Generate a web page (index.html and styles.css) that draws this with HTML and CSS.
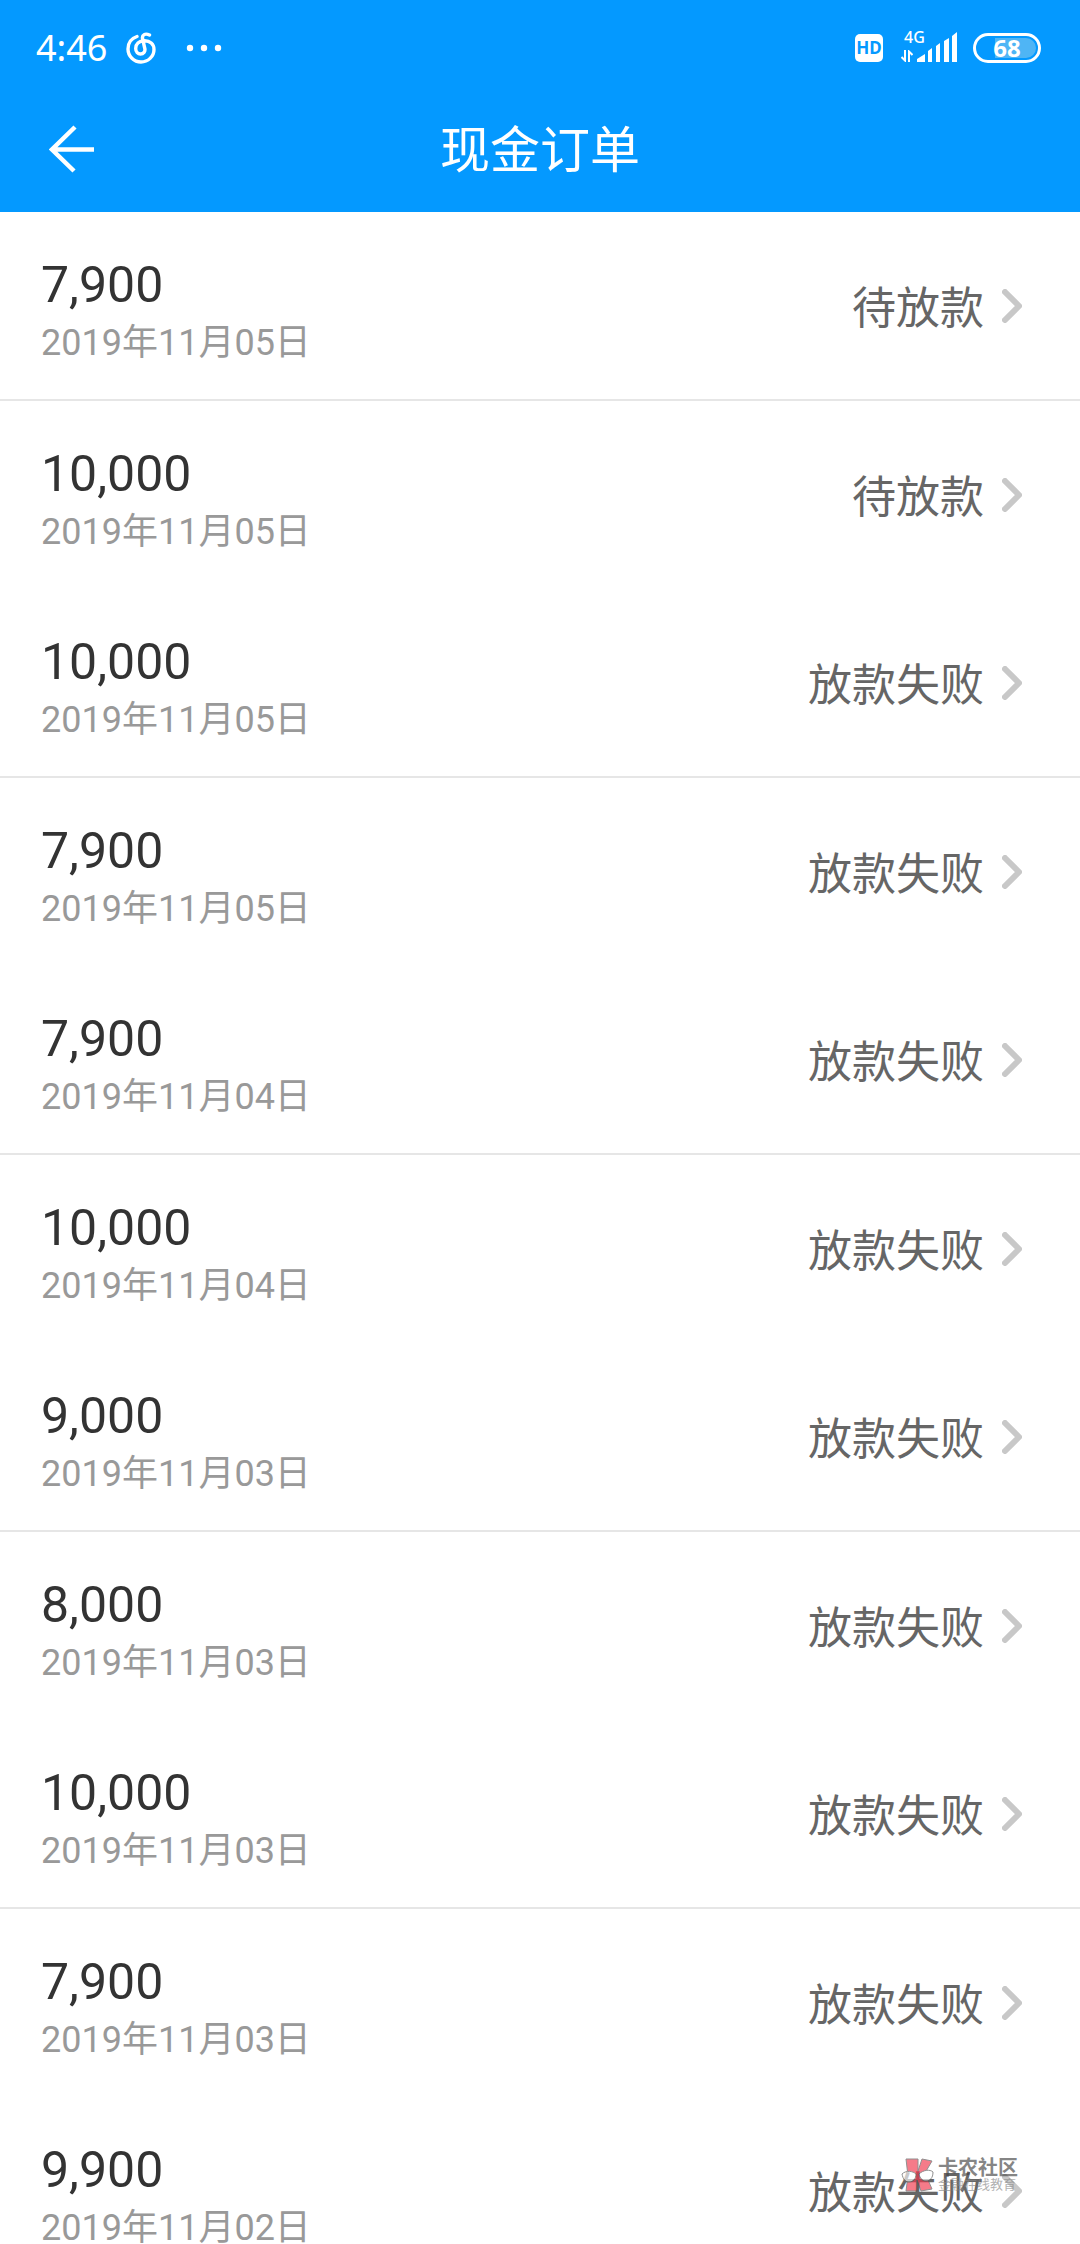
FILE: index.html
```html
<!DOCTYPE html>
<html lang="zh-CN">
<head>
<meta charset="utf-8">
<meta name="viewport" content="width=device-width, initial-scale=1">
<title>现金订单</title>
<link rel="stylesheet" href="styles.css">
</head>
<body>
<svg class="defs" aria-hidden="true">
  <symbol id="chevron" viewBox="0 0 20 34"><path d="M3 3L17 17L3 31" fill="none" stroke="#c8c8c8" stroke-width="6" stroke-linecap="round" stroke-linejoin="round"/></symbol>
</svg>
<div class="screen">
  <header class="header">
    <div class="statusbar">
      <div class="status-left">
        <span class="clock">4:46</span>
        <svg class="music" viewBox="0 0 30 32" aria-hidden="true"><g fill="none" stroke="#fff" stroke-width="3.4" stroke-linecap="round"><path d="M11 4.500C5 6.500 2 11 2 17C2 24.500 8 30 15 30C22 30 28 24.500 28 17.500C28 12 24 8.500 18 8.800C13 9 9.700 12 9.700 16.500C9.700 20 12 22 14.500 22C17.500 22 19.500 19.500 18.800 16.500L16.500 6.500C16 3 19 0.800 23.500 3"/></g></svg>
        <svg class="dots" viewBox="0 0 36 8" aria-hidden="true"><g fill="#fff"><circle cx="4" cy="4" r="3.200"/><circle cx="18" cy="4" r="3.200"/><circle cx="32" cy="4" r="3.200"/></g></svg>
      </div>
      <div class="status-right">
        <span class="hd">HD</span>
        <div class="network">
          <div class="network-type"><span class="gen">4G</span>
            <svg class="arrows" viewBox="0 0 12 12" aria-hidden="true"><path d="M4 0V10.500L0.500 7M8 12V1.500L11.500 5" fill="none" stroke="#fff" stroke-width="2"/></svg>
          </div>
          <svg class="signal" viewBox="0 0 40 30" aria-hidden="true"><path fill="#fff" d="M0 27L8 22V30H0ZM11 19L15 16V30H11ZM19 14L23 11V30H19ZM27 9L32 6V30H27ZM35 4L40 0V30H35Z"/></svg>
        </div>
        <span class="battery"><span class="battery-level">68</span></span>
      </div>
    </div>
    <div class="navbar">
      <button class="back" type="button" aria-label="返回"><svg viewBox="0 0 46 48" aria-hidden="true"><path d="M26 2L3 24.500L25 46M3 24.500H45" fill="none" stroke="#fff" stroke-width="4.500"/></svg></button>
      <h1 class="title">现金订单</h1>
    </div>
  </header>
  <main class="orders">
    <a class="order" href="#"><span class="info"><span class="amount">7,900</span><span class="date">2019年11月05日</span></span><span class="state">待放款</span><svg class="chevron"><use href="#chevron"/></svg></a>
    <a class="order" href="#"><span class="info"><span class="amount">10,000</span><span class="date">2019年11月05日</span></span><span class="state">待放款</span><svg class="chevron"><use href="#chevron"/></svg></a>
    <a class="order" href="#"><span class="info"><span class="amount">10,000</span><span class="date">2019年11月05日</span></span><span class="state">放款失败</span><svg class="chevron"><use href="#chevron"/></svg></a>
    <a class="order" href="#"><span class="info"><span class="amount">7,900</span><span class="date">2019年11月05日</span></span><span class="state">放款失败</span><svg class="chevron"><use href="#chevron"/></svg></a>
    <a class="order" href="#"><span class="info"><span class="amount">7,900</span><span class="date">2019年11月04日</span></span><span class="state">放款失败</span><svg class="chevron"><use href="#chevron"/></svg></a>
    <a class="order" href="#"><span class="info"><span class="amount">10,000</span><span class="date">2019年11月04日</span></span><span class="state">放款失败</span><svg class="chevron"><use href="#chevron"/></svg></a>
    <a class="order" href="#"><span class="info"><span class="amount">9,000</span><span class="date">2019年11月03日</span></span><span class="state">放款失败</span><svg class="chevron"><use href="#chevron"/></svg></a>
    <a class="order" href="#"><span class="info"><span class="amount">8,000</span><span class="date">2019年11月03日</span></span><span class="state">放款失败</span><svg class="chevron"><use href="#chevron"/></svg></a>
    <a class="order" href="#"><span class="info"><span class="amount">10,000</span><span class="date">2019年11月03日</span></span><span class="state">放款失败</span><svg class="chevron"><use href="#chevron"/></svg></a>
    <a class="order" href="#"><span class="info"><span class="amount">7,900</span><span class="date">2019年11月03日</span></span><span class="state">放款失败</span><svg class="chevron"><use href="#chevron"/></svg></a>
    <a class="order" href="#"><span class="info"><span class="amount">9,900</span><span class="date">2019年11月02日</span></span><span class="state">放款失败</span><svg class="chevron"><use href="#chevron"/></svg></a>
  </main>
  <div class="watermark">
    <svg class="mark" viewBox="0 0 34 34" aria-hidden="true">
      <g stroke="#555" stroke-width="1"><path fill="#f0354b" d="M5 1H17V13L21 1L31 3L24 15L31 31L20 33L16 22V33H5L7 18Z"/><path fill="#fff" d="M1 16C5 12 12 13 15 16C15 21 12 24 8 24C4 24 2 21 1 16ZM18 16C22 12 29 11 32 14C32 20 29 23 25 23C21 23 19 20 18 16Z"/></g>
    </svg>
    <div class="mark-text"><span class="mark-name">卡农社区</span><span class="mark-sub">金融在线教育</span></div>
  </div>
</div>
</body>
</html>
```
FILE: styles.css
```css
* {
  box-sizing: border-box;
}

body {
  margin: 0;
  background: #fff;
  font-family: Roboto, "Noto Sans CJK SC", sans-serif;
}

.defs {
  display: none;
}

.screen {
  position: relative;
  display: flex;
  flex-direction: column;
  height: 100vh;
  overflow: hidden;
}

.header {
  flex: none;
  background: #0499ff;
  color: #fff;
}

/* System status bar */
.statusbar {
  display: flex;
  justify-content: space-between;
  align-items: center;
  height: 86px;
  padding: 10px 39px 0 36px;
}

.status-left,
.status-right,
.network {
  display: flex;
  align-items: center;
}

.clock {
  font: 36px/40px "Noto Sans", sans-serif;
}

.music {
  width: 30px;
  height: 32px;
  margin: 0 30px 0 19px;
}

.dots {
  width: 36px;
  height: 8px;
}

.hd {
  width: 28px;
  border-radius: 5px;
  background: #fff;
  color: #0499ff;
  font: bold 17px/28px "Noto Sans", sans-serif;
  text-align: center;
}

.network {
  align-items: flex-end;
  margin: 0 16px 0 18px;
  padding-bottom: 4px;
}

.network-type {
  display: flex;
  flex-direction: column;
  gap: 6px;
  width: 16px;
}

.gen {
  padding-left: 3px;
  font: 500 16px/14px "Noto Sans", sans-serif;
}

.arrows {
  width: 12px;
  height: 12px;
}

.signal {
  width: 40px;
  height: 30px;
}

.battery {
  width: 68px;
  height: 30px;
  padding: 2px;
  border: 3px solid #fff;
  border-radius: 15px;
}

.battery-level {
  display: block;
  border-radius: 10px;
  background: linear-gradient(90deg, transparent 30%, #4fb5f5 30%);
  font: bold 24px/20px "Noto Sans", sans-serif;
  text-align: center;
}

/* Title bar */
.navbar {
  display: grid;
  grid-template-columns: 1fr auto 1fr;
  align-items: center;
  height: 126px;
  padding: 0 49px;
}

.back {
  width: 46px;
  height: 48px;
  padding: 0;
  border: 0;
  background: none;
}

.back svg {
  display: block;
  width: 46px;
  height: 48px;
}

.title {
  margin: 0;
  padding-top: 4px;
  font-size: 50px;
  font-weight: 400;
  line-height: 60px;
}

/* Order list */
.orders {
  flex: 1;
  min-height: 0;
  overflow-y: auto;
  scrollbar-width: none;
}

.order {
  display: flex;
  align-items: center;
  height: 188px;
  padding: 0 58px 0 41px;
  color: #666;
  text-decoration: none;
}

.order:nth-child(odd) {
  height: 189px;
  border-bottom: 2px solid #e6e6e6;
}

.info {
  display: flex;
  flex: 1;
  flex-direction: column;
  gap: 4px;
  padding-top: 10px;
}

.amount {
  color: #333;
  font-size: 50px;
  line-height: 60px;
}

.date {
  color: #999;
  font-size: 36px;
  line-height: 48px;
}

.state {
  padding-top: 6px;
  font-size: 44px;
  line-height: 60px;
}

.chevron {
  width: 20px;
  height: 34px;
  margin-left: 18px;
}

/* Community watermark over the list */
.watermark {
  position: absolute;
  right: 62px;
  bottom: 52px;
  display: flex;
  align-items: center;
  gap: 3px;
  opacity: 0.65;
  pointer-events: none;
}

.mark {
  width: 34px;
  height: 34px;
}

.mark-text {
  display: flex;
  flex-direction: column;
}

.mark-name {
  color: #444;
  font-size: 20px;
  font-weight: 700;
  line-height: 20px;
}

.mark-sub {
  color: #888;
  font-size: 13px;
  line-height: 14px;
}
```
